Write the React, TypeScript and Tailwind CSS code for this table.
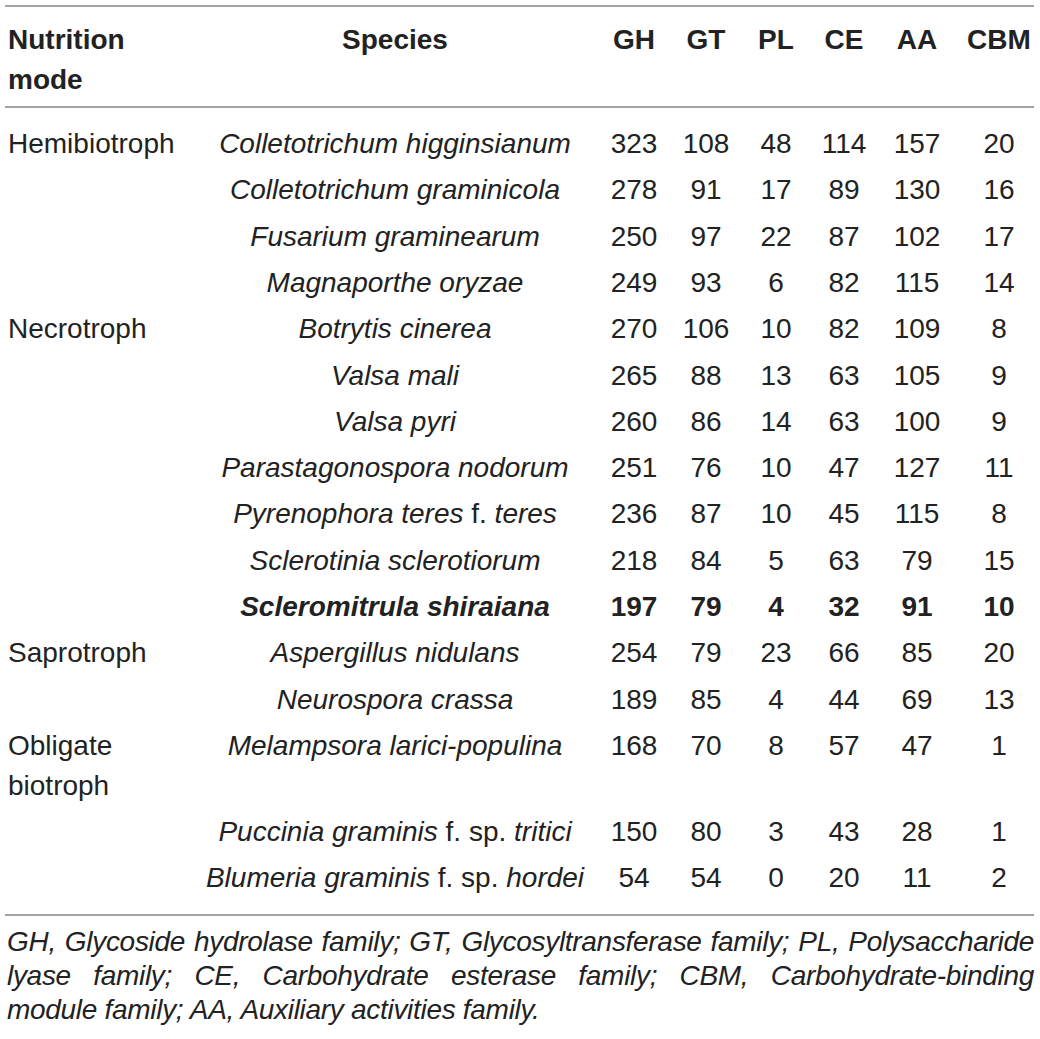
import React from 'react';

type Row = {
  mode?: string[];
  species: React.ReactNode;
  values: number[];
  bold?: boolean;
};

const rows: Row[] = [
  { mode: ['Hemibiotroph'], species: <i>Colletotrichum higginsianum</i>, values: [323, 108, 48, 114, 157, 20] },
  { species: <i>Colletotrichum graminicola</i>, values: [278, 91, 17, 89, 130, 16] },
  { species: <i>Fusarium graminearum</i>, values: [250, 97, 22, 87, 102, 17] },
  { species: <i>Magnaporthe oryzae</i>, values: [249, 93, 6, 82, 115, 14] },
  { mode: ['Necrotroph'], species: <i>Botrytis cinerea</i>, values: [270, 106, 10, 82, 109, 8] },
  { species: <i>Valsa mali</i>, values: [265, 88, 13, 63, 105, 9] },
  { species: <i>Valsa pyri</i>, values: [260, 86, 14, 63, 100, 9] },
  { species: <i>Parastagonospora nodorum</i>, values: [251, 76, 10, 47, 127, 11] },
  {
    species: (
      <>
        <i>Pyrenophora teres</i> f. <i>teres</i>
      </>
    ),
    values: [236, 87, 10, 45, 115, 8],
  },
  { species: <i>Sclerotinia sclerotiorum</i>, values: [218, 84, 5, 63, 79, 15] },
  { species: <i>Scleromitrula shiraiana</i>, values: [197, 79, 4, 32, 91, 10], bold: true },
  { mode: ['Saprotroph'], species: <i>Aspergillus nidulans</i>, values: [254, 79, 23, 66, 85, 20] },
  { species: <i>Neurospora crassa</i>, values: [189, 85, 4, 44, 69, 13] },
  { mode: ['Obligate', 'biotroph'], species: <i>Melampsora larici-populina</i>, values: [168, 70, 8, 57, 47, 1] },
  {
    species: (
      <>
        <i>Puccinia graminis</i> f. sp. <i>tritici</i>
      </>
    ),
    values: [150, 80, 3, 43, 28, 1],
  },
  {
    species: (
      <>
        <i>Blumeria graminis</i> f. sp. <i>hordei</i>
      </>
    ),
    values: [54, 54, 0, 20, 11, 2],
  },
];

const families = ['GH', 'GT', 'PL', 'CE', 'AA', 'CBM'];

const gridCols = 'grid grid-cols-[195px_390px_88px_56px_84px_52px_94px_70px]';

export default function App() {
  return (
    <div
      className="bg-white w-[1040px] h-[1039px] pt-[5px] pl-[5px] text-[#222] text-[28px]"
      style={{ fontFamily: '"Liberation Sans", Arial, sans-serif' }}
    >
      <div className="w-[1029px]">
        {/* Header */}
        <div className={`${gridCols} border-t-2 border-b-2 border-[#a3a3a3] font-bold leading-[40px] pt-[13px] pb-[6px]`}>
          <div className="pl-[3px]">
            Nutrition
            <br />
            mode
          </div>
          <div className="text-center">Species</div>
          {families.map((f) => (
            <div key={f} className="text-center">
              {f}
            </div>
          ))}
        </div>

        {/* Body */}
        <div className="pt-[13px] pb-[12px] border-b-2 border-[#a3a3a3]">
          {rows.map((row, i) => (
            <div key={i} className={`${gridCols} leading-[40px] py-[3.15px] ${row.bold ? 'font-bold' : ''}`}>
              <div className="pl-[3px]">
                {row.mode?.map((m, j) => (
                  <div key={j}>{m}</div>
                ))}
              </div>
              <div className="text-center whitespace-nowrap">{row.species}</div>
              {row.values.map((v, j) => (
                <div key={j} className="text-center">
                  {v}
                </div>
              ))}
            </div>
          ))}
        </div>

        {/* Footnote */}
        <div className="italic leading-[34px] pt-[9px] pl-[2px] tracking-[-0.3px]">
          <p className="whitespace-nowrap text-justify [text-align-last:justify]">
            GH, Glycoside hydrolase family; GT, Glycosyltransferase family; PL, Polysaccharide
          </p>
          <p className="whitespace-nowrap text-justify [text-align-last:justify]">
            lyase family; CE, Carbohydrate esterase family; CBM, Carbohydrate-binding
          </p>
          <p>module family; AA, Auxiliary activities family.</p>
        </div>
      </div>
    </div>
  );
}
